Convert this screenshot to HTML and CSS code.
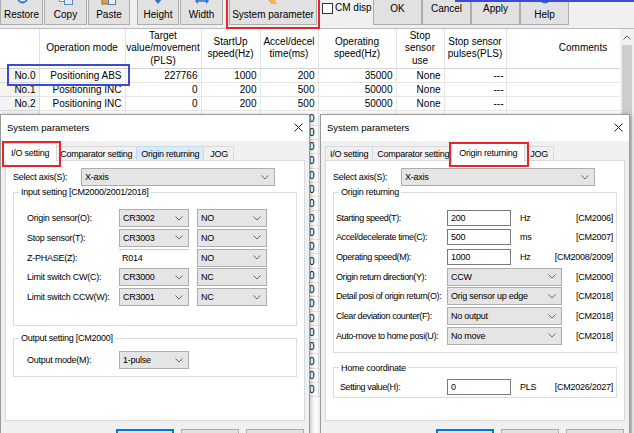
FILE: index.html
```html
<!DOCTYPE html>
<html lang="en">
<head>
<meta charset="utf-8">
<title>System parameters</title>
<link rel="stylesheet" href="styles.css">
</head>
<body>
<div class="toolbar">
  <div class="tbtn b-restore">
    <svg class="ico" viewBox="0 0 16 16" width="16" height="16"><path d="M4 9a4.5 4.5 0 1 0 4.5-4.5H6" fill="none" stroke="#2f74d0" stroke-width="1.8"/><path d="M6.5 1.5L3 4.5l3.5 3z" fill="#2f74d0"/></svg>
    <span>Restore</span>
  </div>
  <div class="tbtn b-copy">
    <svg class="ico" viewBox="0 0 16 16" width="16" height="16"><rect x="1.5" y="2.5" width="8" height="10" fill="#fff" stroke="#8a8a8a"/><rect x="6.5" y="5.5" width="8" height="10" fill="#dfe9f7" stroke="#5b86c4"/></svg>
    <span>Copy</span>
  </div>
  <div class="tbtn b-paste">
    <svg class="ico" viewBox="0 0 16 16" width="16" height="16"><rect x="1" y="3" width="10" height="12" fill="#d9a04a" stroke="#9a6a22"/><rect x="7.5" y="7.5" width="7" height="8" fill="#e9f0fa" stroke="#4f7fc2"/></svg>
    <span>Paste</span>
  </div>
  <div class="tbtn b-height">
    <svg class="ico" viewBox="0 0 16 16" width="16" height="16"><path d="M8 1v10" stroke="#2f74d0" stroke-width="2"/><path d="M4 10h8l-4 5z" fill="#2f74d0"/></svg>
    <span>Height</span>
  </div>
  <div class="tbtn b-width">
    <svg class="ico" viewBox="0 0 16 16" width="16" height="16"><path d="M3 12h10" stroke="#2f74d0" stroke-width="1.6"/><path d="M1 12l3-3v6zM15 12l-3-3v6z" fill="#2f74d0"/></svg>
    <span>Width</span>
  </div>
  <div class="tbtn b-sys">
    <svg class="ico" viewBox="0 0 16 16" width="16" height="16"><circle cx="7" cy="9" r="4" fill="#e8a24a"/><path d="M6 10c2 0 5 1 6 5H5z" fill="#f2b35a"/><rect x="9" y="5" width="5" height="6" rx="1" fill="#f6c47a"/></svg>
    <span>System parameter</span>
  </div>
  <label class="cmdisp"><span class="cbox"></span><span>CM disp</span></label>
  <div class="obtn">OK</div>
  <div class="obtn">Cancel</div>
  <div class="obtn">Apply</div>
  <div class="tbtn b-help">
    <svg class="ico" viewBox="0 0 16 16" width="16" height="16"><circle cx="8" cy="8" r="6.5" fill="#2f74d0"/><path d="M8 10.5v1.5" stroke="#fff" stroke-width="1.4"/></svg>
    <span>Help</span>
  </div>
</div>

<div class="main">
  <div class="gridclip">
    <table class="grid">
      <colgroup>
        <col class="c0"><col class="c1"><col class="c2"><col class="c3"><col class="c4"><col class="c5"><col class="c6"><col class="c7"><col class="c8">
      </colgroup>
      <thead>
        <tr><th></th><th>Operation mode</th><th>Target<br>value/movement<br>(PLS)</th><th>StartUp<br>speed(Hz)</th><th>Accel/decel<br>time(ms)</th><th>Operating<br>speed(Hz)</th><th>Stop<br>sensor<br>use</th><th>Stop sensor<br>pulses(PLS)</th><th>Comments</th></tr>
      </thead>
      <tbody>
        <tr><td class="rh">No.0</td><td>Positioning ABS</td><td>227766</td><td>1000</td><td>200</td><td>35000</td><td>None</td><td class="dash">---</td><td></td></tr>
        <tr><td class="rh">No.1</td><td>Positioning INC</td><td>0</td><td>200</td><td>500</td><td>50000</td><td>None</td><td class="dash">---</td><td></td></tr>
        <tr><td class="rh">No.2</td><td>Positioning INC</td><td>0</td><td>200</td><td>500</td><td>50000</td><td>None</td><td class="dash">---</td><td></td></tr>
        <tr><td class="rh"></td><td></td><td></td><td></td><td>500</td><td></td><td></td><td></td><td></td></tr>
        <tr><td class="rh"></td><td></td><td></td><td></td><td>500</td><td></td><td></td><td></td><td></td></tr>
        <tr><td class="rh"></td><td></td><td></td><td></td><td>500</td><td></td><td></td><td></td><td></td></tr>
        <tr><td class="rh"></td><td></td><td></td><td></td><td>500</td><td></td><td></td><td></td><td></td></tr>
        <tr><td class="rh"></td><td></td><td></td><td></td><td>500</td><td></td><td></td><td></td><td></td></tr>
        <tr><td class="rh"></td><td></td><td></td><td></td><td>500</td><td></td><td></td><td></td><td></td></tr>
        <tr><td class="rh"></td><td></td><td></td><td></td><td>500</td><td></td><td></td><td></td><td></td></tr>
        <tr><td class="rh"></td><td></td><td></td><td></td><td>500</td><td></td><td></td><td></td><td></td></tr>
        <tr><td class="rh"></td><td></td><td></td><td></td><td>500</td><td></td><td></td><td></td><td></td></tr>
        <tr><td class="rh"></td><td></td><td></td><td></td><td>500</td><td></td><td></td><td></td><td></td></tr>
        <tr><td class="rh"></td><td></td><td></td><td></td><td>500</td><td></td><td></td><td></td><td></td></tr>
        <tr><td class="rh"></td><td></td><td></td><td></td><td>500</td><td></td><td></td><td></td><td></td></tr>
        <tr><td class="rh"></td><td></td><td></td><td></td><td>500</td><td></td><td></td><td></td><td></td></tr>
        <tr><td class="rh"></td><td></td><td></td><td></td><td>500</td><td></td><td></td><td></td><td></td></tr>
        <tr><td class="rh"></td><td></td><td></td><td></td><td>500</td><td></td><td></td><td></td><td></td></tr>
        <tr><td class="rh"></td><td></td><td></td><td></td><td>500</td><td></td><td></td><td></td><td></td></tr>
        <tr><td class="rh"></td><td></td><td></td><td></td><td>500</td><td></td><td></td><td></td><td></td></tr>
        <tr><td class="rh"></td><td></td><td></td><td></td><td>500</td><td></td><td></td><td></td><td></td></tr>
        <tr><td class="rh"></td><td></td><td></td><td></td><td>500</td><td></td><td></td><td></td><td></td></tr>
        <tr><td class="rh"></td><td></td><td></td><td></td><td>500</td><td></td><td></td><td></td><td></td></tr>
      </tbody>
    </table>
  </div>
  <div class="vscroll">
    <div class="sb-up"><svg width="8" height="5" viewBox="0 0 8 5"><path d="M0.5 4.5L4 1l3.5 3.5" fill="none" stroke="#606060"/></svg></div>
    <div class="sb-thumb"></div>
  </div>
</div>

<!-- Left dialog: I/O setting -->
<div class="dlg dlg-left">
  <div class="titlebar">
    <span>System parameters</span>
    <svg class="close" width="9" height="9" viewBox="0 0 9 9"><path d="M0.5 0.5l8 8M8.5 0.5l-8 8" stroke="#222" stroke-width="1"/></svg>
  </div>
  <div class="client">
    <div class="tabs">
      <div class="tab sel">I/O setting</div>
      <div class="tab">Comparator setting</div>
      <div class="tab hov">Origin returning</div>
      <div class="tab last">JOG</div>
    </div>
    <div class="panel">
      <div class="axis">
        <span class="albl">Select axis(S):</span>
        <div class="combo w194"><span>X-axis</span><svg width="8" height="5" viewBox="0 0 8 5"><path d="M0.5 0.5L4 4l3.5-3.5" fill="none" stroke="#666"/></svg></div>
      </div>
      <fieldset class="grp">
        <legend>Input setting [CM2000/2001/2018]</legend>
        <div class="io-rows">
          <div class="io-row"><span class="io-lbl">Origin sensor(O):</span>
            <div class="combo w70"><span>CR3002</span><svg width="8" height="5" viewBox="0 0 8 5"><path d="M0.5 0.5L4 4l3.5-3.5" fill="none" stroke="#666"/></svg></div>
            <div class="combo w70 c2"><span>NO</span><svg width="8" height="5" viewBox="0 0 8 5"><path d="M0.5 0.5L4 4l3.5-3.5" fill="none" stroke="#666"/></svg></div>
          </div>
          <div class="io-row"><span class="io-lbl">Stop sensor(T):</span>
            <div class="combo w70"><span>CR3003</span><svg width="8" height="5" viewBox="0 0 8 5"><path d="M0.5 0.5L4 4l3.5-3.5" fill="none" stroke="#666"/></svg></div>
            <div class="combo w70 c2"><span>NO</span><svg width="8" height="5" viewBox="0 0 8 5"><path d="M0.5 0.5L4 4l3.5-3.5" fill="none" stroke="#666"/></svg></div>
          </div>
          <div class="io-row"><span class="io-lbl">Z-PHASE(Z):</span>
            <div class="zfield">R014</div>
            <div class="combo w70 c2"><span>NO</span><svg width="8" height="5" viewBox="0 0 8 5"><path d="M0.5 0.5L4 4l3.5-3.5" fill="none" stroke="#666"/></svg></div>
          </div>
          <div class="io-row"><span class="io-lbl">Limit switch CW(C):</span>
            <div class="combo w70"><span>CR3000</span><svg width="8" height="5" viewBox="0 0 8 5"><path d="M0.5 0.5L4 4l3.5-3.5" fill="none" stroke="#666"/></svg></div>
            <div class="combo w70 c2"><span>NC</span><svg width="8" height="5" viewBox="0 0 8 5"><path d="M0.5 0.5L4 4l3.5-3.5" fill="none" stroke="#666"/></svg></div>
          </div>
          <div class="io-row"><span class="io-lbl">Limit switch CCW(W):</span>
            <div class="combo w70"><span>CR3001</span><svg width="8" height="5" viewBox="0 0 8 5"><path d="M0.5 0.5L4 4l3.5-3.5" fill="none" stroke="#666"/></svg></div>
            <div class="combo w70 c2"><span>NC</span><svg width="8" height="5" viewBox="0 0 8 5"><path d="M0.5 0.5L4 4l3.5-3.5" fill="none" stroke="#666"/></svg></div>
          </div>
        </div>
      </fieldset>
      <fieldset class="grp grp-out">
        <legend>Output setting [CM2000]</legend>
        <div class="out-rows">
          <div class="io-row"><span class="io-lbl">Output mode(M):</span>
            <div class="combo w70"><span>1-pulse</span><svg width="8" height="5" viewBox="0 0 8 5"><path d="M0.5 0.5L4 4l3.5-3.5" fill="none" stroke="#666"/></svg></div>
          </div>
        </div>
      </fieldset>
    </div>
    <div class="dbtns"><div class="dbtn def"></div><div class="dbtn"></div><div class="dbtn"></div></div>
  </div>
</div>

<!-- Right dialog: Origin returning -->
<div class="dlg dlg-right">
  <div class="titlebar">
    <span>System parameters</span>
    <svg class="close" width="9" height="9" viewBox="0 0 9 9"><path d="M0.5 0.5l8 8M8.5 0.5l-8 8" stroke="#222" stroke-width="1"/></svg>
  </div>
  <div class="client">
    <div class="tabs">
      <div class="tab">I/O setting</div>
      <div class="tab">Comparator setting</div>
      <div class="tab sel">Origin returning</div>
      <div class="tab last">JOG</div>
    </div>
    <div class="panel">
      <div class="axis">
        <span class="albl">Select axis(S):</span>
        <div class="combo w194"><span>X-axis</span><svg width="8" height="5" viewBox="0 0 8 5"><path d="M0.5 0.5L4 4l3.5-3.5" fill="none" stroke="#666"/></svg></div>
      </div>
      <fieldset class="grp">
        <legend>Origin returning</legend>
        <div class="or-rows">
          <div class="or-row"><span class="or-lbl">Starting speed(T):</span><div class="tbox">200</div><span class="unit">Hz</span><span class="ref">[CM2006]</span></div>
          <div class="or-row"><span class="or-lbl">Accel/decelerate time(C):</span><div class="tbox">500</div><span class="unit">ms</span><span class="ref">[CM2007]</span></div>
          <div class="or-row"><span class="or-lbl">Operating speed(M):</span><div class="tbox">1000</div><span class="unit">Hz</span><span class="ref">[CM2008/2009]</span></div>
          <div class="or-row"><span class="or-lbl">Origin return direction(Y):</span><div class="combo w115"><span>CCW</span><svg width="8" height="5" viewBox="0 0 8 5"><path d="M0.5 0.5L4 4l3.5-3.5" fill="none" stroke="#666"/></svg></div><span class="ref">[CM2000]</span></div>
          <div class="or-row"><span class="or-lbl">Detail posi of origin return(O):</span><div class="combo w115"><span>Orig sensor up edge</span><svg width="8" height="5" viewBox="0 0 8 5"><path d="M0.5 0.5L4 4l3.5-3.5" fill="none" stroke="#666"/></svg></div><span class="ref">[CM2018]</span></div>
          <div class="or-row"><span class="or-lbl">Clear deviation counter(F):</span><div class="combo w115"><span>No output</span><svg width="8" height="5" viewBox="0 0 8 5"><path d="M0.5 0.5L4 4l3.5-3.5" fill="none" stroke="#666"/></svg></div><span class="ref">[CM2018]</span></div>
          <div class="or-row"><span class="or-lbl">Auto-move to home posi(U):</span><div class="combo w115"><span>No move</span><svg width="8" height="5" viewBox="0 0 8 5"><path d="M0.5 0.5L4 4l3.5-3.5" fill="none" stroke="#666"/></svg></div><span class="ref">[CM2018]</span></div>
        </div>
      </fieldset>
      <fieldset class="grp grp-home">
        <legend>Home coordinate</legend>
        <div class="home-rows">
          <div class="or-row"><span class="or-lbl home-lbl">Setting value(H):</span><div class="tbox">0</div><span class="unit">PLS</span><span class="ref">[CM2026/2027]</span></div>
        </div>
      </fieldset>
    </div>
    <div class="dbtns"><div class="dbtn def"></div><div class="dbtn"></div><div class="dbtn"></div></div>
  </div>
</div>

<div class="mark mark-sys"></div>
<div class="mark mark-row"></div>
<div class="mark mark-tab1"></div>
<div class="mark mark-tab2"></div>
<div class="topline"></div>
</body>
</html>
```

FILE: styles.css
```css
* { box-sizing: border-box; }
html, body { margin: 0; padding: 0; }
body {
  width: 634px;
  height: 433px;
  overflow: hidden;
  position: relative;
  background: #f0f0f0;
  font-family: "Liberation Sans", Arial, sans-serif;
  font-size: 10px;
  color: #000;
}

/* ---------- toolbar ---------- */
.toolbar {
  height: 29px;
  display: flex;
  align-items: flex-start;
  border-bottom: 1px solid #bcbcbc;
  background: #f0f0f0;
  overflow: hidden;
}
.tbtn {
  flex: none;
  margin-top: -15px;
  height: 40px;
  border: 1px solid #adadad;
  background: #e1e1e1;
  display: flex;
  flex-direction: column;
  align-items: center;
  justify-content: space-between;
  padding: 3px 0 3px;
  line-height: 12px;
  white-space: nowrap;
}
.tbtn .ico { display: block; width: 16px; height: 16px; }
.b-restore { width: 43px; }
.b-copy { width: 43px; margin-left: 1px; }
.b-paste { width: 42px; margin-left: 1px; }
.b-height { width: 42px; margin-left: 7px; }
.b-width { width: 43px; margin-left: 1px; }
.b-sys { width: 88px; margin-left: 6px; }
.b-help { width: 49px; margin-left: 0; }
.cmdisp {
  flex: none;
  width: 51px;
  margin-left: 5px;
  margin-top: 2px;
  display: flex;
  align-items: center;
  white-space: nowrap;
  line-height: 12px;
}
.cbox {
  width: 11px;
  height: 11px;
  border: 1px solid #333;
  background: #fff;
  margin-right: 2px;
  flex: none;
}
.obtn {
  flex: none;
  margin-top: -9px;
  height: 34px;
  width: 49px;
  border: 1px solid #adadad;
  background: #e1e1e1;
  display: flex;
  align-items: center;
  justify-content: center;
}

/* ---------- grid ---------- */
.main { display: flex; height: 404px; }
.gridclip { width: 620px; overflow: hidden; background: #fff; }
.grid {
  border-collapse: collapse;
  table-layout: fixed;
  width: 660px;
  font-size: 10px;
}
.c0 { width: 39px; }
.c1 { width: 86px; }
.c2 { width: 76px; }
.c3 { width: 59px; }
.c4 { width: 58px; }
.c5 { width: 78px; }
.c6 { width: 48px; }
.c7 { width: 62px; }
.c8 { width: 154px; }
.grid th {
  height: 39px;
  padding: 0;
  font-weight: normal;
  line-height: 12.5px;
  text-align: center;
  vertical-align: middle;
  border-right: 1px solid #e2e2e2;
  border-bottom: 1px solid #d4d4d4;
  background: #fff;
}
.grid td {
  height: 14.3px;
  padding: 0 3px 0 0;
  line-height: 13px;
  text-align: right;
  white-space: nowrap;
  overflow: hidden;
  border-right: 1px solid #e6e6e6;
  border-bottom: 1px solid #e6e6e6;
}
.grid td.rh { background: #f4f4f4; border-color: #dadada; }
.grid td.dash { padding-right: 2px; }
.vscroll {
  width: 14px;
  background: #f0f0f0;
  display: flex;
  flex-direction: column;
  align-items: center;
}
.sb-up { height: 16px; display: flex; align-items: center; justify-content: center; }
.sb-thumb { flex: 1; width: 10px; background: #cdcdcd; }

/* ---------- dialogs ---------- */
.dlg {
  position: absolute;
  top: 114px;
  width: 310px;
  height: 330px;
  background: #f0f0f0;
  border: 1px solid #9a9a9a;
  box-shadow: 1px 1px 5px rgba(0, 0, 0, 0.28);
  font-size: 9px;
  letter-spacing: -0.25px;
}
.dlg-left { left: 0; }
.dlg-right { left: 320px; }
.titlebar {
  height: 26px;
  background: #fff;
  display: flex;
  align-items: center;
  justify-content: space-between;
  padding: 0 6px 1px;
  font-size: 9.5px;
  letter-spacing: 0;
}
.close { display: block; }
.client { padding: 0 4px; }
.tabs {
  height: 19px;
  display: flex;
  align-items: flex-end;
  position: relative;
  z-index: 1;
}
.tab {
  height: 14px;
  padding: 1px 4px 0;
  line-height: 13px;
  border: 1px solid #d9d9d9;
  border-bottom: none;
  background: #f0f0f0;
  white-space: nowrap;
  margin-right: -1px;
}
.tab.last { padding: 1px 5px 0 6px; }
.tab.hov { background: #d9eaf9; border-color: #c4dbf0; }
.tab.sel {
  height: 18px;
  margin: 0 -2px -1px -2px;
  padding: 3px 7px 0;
  background: #fff;
  position: relative;
  z-index: 2;
}
.panel {
  height: 261px;
  border: 1px solid #d9d9d9;
  background: #fff;
  padding: 7px 7px 0;
}
.axis { display: flex; align-items: center; height: 18px; }
.albl { width: 68px; flex: none; white-space: nowrap; }
.combo {
  flex: none;
  height: 18px;
  border: 1px solid #adadad;
  background: #e5e5e5;
  display: flex;
  align-items: center;
  justify-content: space-between;
  padding: 0 5px 0 3px;
  white-space: nowrap;
  overflow: hidden;
}
.combo svg { flex: none; display: block; }
.w194 { width: 194px; }
.w70 { width: 70px; }
.w115 { width: 115px; }
.combo.c2 { margin-left: 8px; }

.grp {
  margin: 0;
  padding: 0;
  border: 1px solid #dcdcdc;
  min-inline-size: 0;
}
.grp legend {
  margin-left: 5px;
  padding: 0 2px;
  line-height: 12px;
}
.io-rows {
  display: flex;
  flex-direction: column;
  gap: 1.75px;
  padding: 11px 0 19px 13px;
}
.io-row { display: flex; align-items: center; height: 18px; }
.io-lbl { width: 92px; flex: none; white-space: nowrap; }
.zfield {
  flex: none;
  width: 70px;
  height: 18px;
  background: #fff;
  border-top: 1px solid #cfcfcf;
  padding: 2px 3px 0;
  line-height: 13px;
}
.grp-out { margin-top: 6px; }
.out-rows { padding: 7px 0 7px 13px; }

.or-rows { padding: 10px 3px 6px 2px; }
.or-row { display: flex; align-items: center; height: 19.67px; white-space: nowrap; }
.or-lbl { width: 111px; flex: none; letter-spacing: -0.4px; overflow: hidden; }
.tbox {
  flex: none;
  width: 64px;
  height: 16px;
  border: 1px solid #7a7a7a;
  background: #fff;
  padding: 0 3px;
  line-height: 14px;
}
.unit { margin-left: 9px; }
.ref { margin-left: auto; }
.grp-home { margin-top: 9px; }
.home-rows { padding: 3.5px 3px 0 6px; }
.home-lbl { width: 107px; }

.dbtns {
  display: flex;
  justify-content: flex-end;
  gap: 7px;
  margin-top: 8px;
  padding-right: 1px;
}
.dbtn {
  width: 58px;
  height: 22px;
  border: 1px solid #adadad;
  background: #e1e1e1;
}
.dbtn.def { border: 2px solid #0078d7; }

/* ---------- annotations ---------- */
.mark {
  position: absolute;
  border: 2px solid #e3262c;
  pointer-events: none;
  z-index: 10;
}
.mark-sys { left: 226px; top: -3px; width: 94px; height: 32px; }
.mark-row { border-color: #3a4bd1; left: 7px; top: 64px; width: 123px; height: 22px; }
.mark-tab1 { left: 2px; top: 141px; width: 59px; height: 26px; }
.mark-tab2 { left: 449px; top: 142px; width: 80px; height: 25px; }
.topline {
  position: absolute;
  left: 455px;
  top: 0;
  width: 179px;
  height: 2px;
  background: #3b4bd6;
  z-index: 10;
}
```
